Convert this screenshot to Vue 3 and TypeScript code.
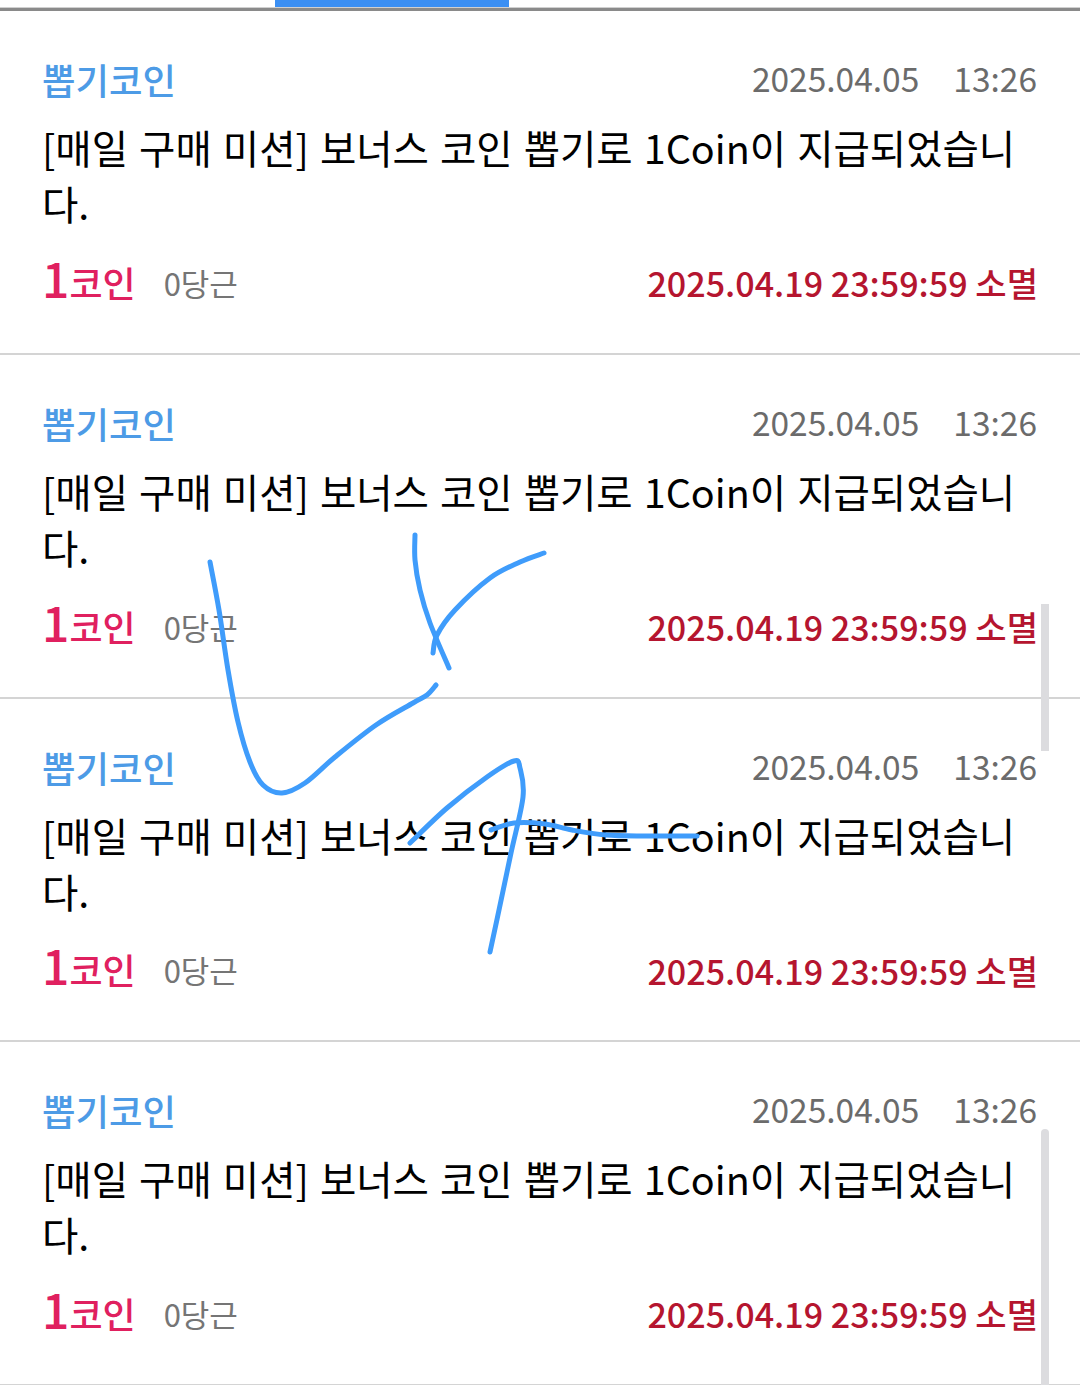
<script setup lang="ts">
type Point = [number, number]

const items = [1, 2, 3, 4].map((id) => ({
  id,
  category: '뽑기코인',
  date: '2025.04.05',
  time: '13:26',
  message: '[매일 구매 미션] 보너스 코인 뽑기로 1Coin이 지급되었습니다.',
  coin: '1',
  carrot: '0당근',
  expire: '2025.04.19 23:59:59 소멸'
}))

// 화면 위에 손으로 그은 선
const strokes: Point[][] = [
  [[210, 562], [219, 610], [228, 670], [238, 722], [250, 762], [263, 785], [282, 793], [305, 783], [335, 757], [376, 725], [413, 703], [427, 695], [436, 685]],
  [[415, 535], [415, 560], [420, 590], [430, 623], [449, 668]],
  [[433, 653], [437, 635], [455, 610], [490, 578], [520, 562], [544, 553]],
  [[410, 843], [447, 808], [487, 777], [514, 761], [520, 768], [523, 797], [511, 853], [499, 910], [490, 952]],
  [[491, 830], [514, 823], [545, 824], [572, 830], [606, 835], [646, 836], [697, 836]]
]

const toPath = (pts: Point[]) => {
  let d = `M${pts[0][0]} ${pts[0][1]}`
  for (let i = 0; i < pts.length - 1; i++) {
    const p0 = pts[Math.max(i - 1, 0)]
    const p1 = pts[i]
    const p2 = pts[i + 1]
    const p3 = pts[Math.min(i + 2, pts.length - 1)]
    const c1x = p1[0] + (p2[0] - p0[0]) / 6
    const c1y = p1[1] + (p2[1] - p0[1]) / 6
    const c2x = p2[0] - (p3[0] - p1[0]) / 6
    const c2y = p2[1] - (p3[1] - p1[1]) / 6
    d += ` C${c1x} ${c1y} ${c2x} ${c2y} ${p2[0]} ${p2[1]}`
  }
  return d
}

const paths = strokes.map(toPath)
</script>

<template>
  <div class="screen">
    <div class="tabs">
      <div class="tab-active"></div>
    </div>

    <ul class="list">
      <li v-for="item in items" :key="item.id" class="item">
        <div class="row-top">
          <span class="category">{{ item.category }}</span>
          <span class="stamp">
            <span>{{ item.date }}</span>
            <span>{{ item.time }}</span>
          </span>
        </div>
        <p class="message">{{ item.message }}</p>
        <div class="row-bottom">
          <span class="amount"><b class="coin-num">{{ item.coin }}</b>코인</span>
          <span class="carrot">{{ item.carrot }}</span>
          <span class="expire">{{ item.expire }}</span>
        </div>
      </li>
    </ul>

    <div class="thumb thumb-a"></div>
    <div class="thumb thumb-b"></div>

    <svg class="ink" viewBox="0 0 1080 1385" width="1080" height="1385">
      <path v-for="(d, i) in paths" :key="i" :d="d" />
    </svg>
  </div>
</template>

<style scoped>
.screen {
  position: relative;
  width: 1080px;
  height: 1385px;
  overflow: hidden;
  background: #fff;
  font-family: "Noto Sans CJK KR", "Noto Sans", sans-serif;
}

.tabs {
  height: 8px;
  border-bottom: 3px solid #8a8a8a;
  box-shadow: inset 0 -1px 0 #d0d0d0;
}

.tab-active {
  width: 234px;
  height: 7px;
  margin-left: 275px;
  background: #3b8ff3;
}

.list {
  margin: 0;
  padding: 0;
  list-style: none;
}

.item {
  box-sizing: border-box;
  height: 343.5px;
  padding: 44px 43px 0 42px;
  border-bottom: 2px solid #d4d4d4;
}

.item:first-child {
  height: 344px;
}

.row-top {
  display: flex;
  justify-content: space-between;
  align-items: center;
  height: 48px;
}

.category {
  font-size: 36.4px;
  font-weight: 500;
  line-height: 48px;
  color: #4d9be6;
}

.stamp {
  display: flex;
  gap: 34px;
  margin-bottom: 2px;
  font-size: 33.5px;
  line-height: 48px;
  color: #6b6b6b;
}

.message {
  margin: 16px 0 0;
  width: 990px;
  font-size: 39.5px;
  word-spacing: 2.2px;
  line-height: 56px;
  color: #000;
  word-break: break-all;
}

.row-bottom {
  display: flex;
  align-items: center;
  height: 56px;
  margin-top: 20px;
}

.amount {
  font-size: 36px;
  font-weight: 500;
  line-height: 56px;
  color: #e0205f;
}

.coin-num {
  font-size: 48px;
  font-weight: 500;
}

.carrot {
  margin: 6px 0 0 28px;
  font-size: 31px;
  color: #757575;
}

.expire {
  margin: 6px -1px 0 auto;
  font-size: 34.1px;
  font-weight: 500;
  color: #b5152f;
}

.thumb {
  position: absolute;
  left: 1041px;
  width: 8px;
  background: #dcdcdf;
}

.thumb-a {
  top: 604px;
  height: 147px;
}

.thumb-b {
  top: 1129px;
  height: 256px;
  border-radius: 4px 4px 0 0;
}

.ink {
  position: absolute;
  inset: 0;
  pointer-events: none;
}

.ink path {
  fill: none;
  stroke: #3f9cfb;
  stroke-width: 5;
  stroke-linecap: round;
  stroke-linejoin: round;
}
</style>

<style>
html,
body {
  margin: 0;
  background: #fff;
}
</style>
